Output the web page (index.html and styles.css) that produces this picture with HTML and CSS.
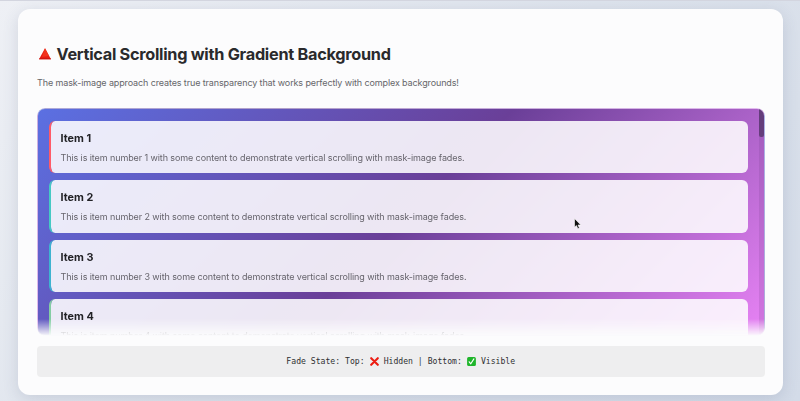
FILE: index.html
```html
<!DOCTYPE html>
<html lang="en">
<head>
<meta charset="utf-8">
<title>Vertical Scrolling with Gradient Background</title>
<link rel="stylesheet" href="styles.css">
</head>
<body>
<main class="panel">
  <h1 class="title">
    <svg class="triangle" viewBox="0 0 14 12" aria-hidden="true"><path d="M7 .3 13 11.2H1Z" fill="#e61b12"/><path d="M7 .3 11 8 4 9Z" fill="#f2321c"/><path d="M1.5 10.2h11l.5 1H1Z" fill="#c9130e"/></svg>
    <span class="title-text">Vertical Scrolling with Gradient Background</span>
  </h1>
  <p class="intro">The mask-image approach creates true transparency that works perfectly with complex backgrounds!</p>
  <section class="scroller">
    <div class="list">
      <article class="item red"><h2>Item 1</h2><p>This is item number 1 with some content to demonstrate vertical scrolling with mask-image fades.</p></article>
      <article class="item teal"><h2>Item 2</h2><p>This is item number 2 with some content to demonstrate vertical scrolling with mask-image fades.</p></article>
      <article class="item blue"><h2>Item 3</h2><p>This is item number 3 with some content to demonstrate vertical scrolling with mask-image fades.</p></article>
      <article class="item green"><h2>Item 4</h2><p>This is item number 4 with some content to demonstrate vertical scrolling with mask-image fades.</p></article>
    </div>
    <div class="track"><div class="thumb"></div></div>
  </section>
  <footer class="status">
    <span>Fade State: Top:</span>
    <svg class="mark" viewBox="0 0 9 9" aria-hidden="true"><path d="M1.2 1.2 7.8 7.8M7.8 1.2 1.2 7.8" stroke="#ec1c12" stroke-width="2.1" stroke-linecap="round"/></svg>
    <span>Hidden | Bottom:</span>
    <svg class="mark" viewBox="0 0 9 9" aria-hidden="true"><rect x=".1" y=".1" width="8.8" height="8.8" rx="1.5" fill="#1fb52b"/><path d="M2.2 4.8 3.8 6.8 6.9 1.9" fill="none" stroke="#fff" stroke-width="1.1" stroke-linecap="round" stroke-linejoin="round"/></svg>
    <span>Visible</span>
  </footer>
</main>
<svg class="cursor" viewBox="0 0 8 12" aria-hidden="true"><path d="M.5.5V9.2L2.4 7.5 3.9 10.8 5.4 10.1 4 7H6.8Z" fill="#111" stroke="#fff" stroke-width=".6"/></svg>
</body>
</html>
```
FILE: styles.css
```css
* { box-sizing: border-box; }

body {
  margin: 0;
  height: 401px;
  padding: 8px 17px 6.5px 18px;
  overflow: hidden;
  border-top: 1px solid #d3d5df;
  background: linear-gradient(135deg, #eef0f5 0%, #dde3ec 50%, #d3dbe8 100%);
  font-family: Inter, sans-serif;
}

.panel {
  height: 385.5px;
  padding: 35px 18.5px 18px 19px;
  border-radius: 12px;
  background: #fcfcfd;
  box-shadow: 0 4px 16px rgba(60, 75, 110, .16);
}

.title {
  display: flex;
  align-items: center;
  height: 20px;
  margin: 0;
  color: #2a2a2c;
  font-size: 16.3px;
  font-weight: 700;
  line-height: 20px;
  white-space: nowrap;
}

.triangle { width: 14px; height: 12px; margin: 0 4.5px 0 1px; }
.title-text { letter-spacing: -.28px; }

.intro {
  height: 14px;
  margin: 12px 0 18px;
  color: #66666a;
  font-size: 9px;
  letter-spacing: -.12px;
  line-height: 14px;
  white-space: nowrap;
}

.scroller {
  display: flex;
  height: 227.5px;
  overflow: hidden;
  border: 1px solid rgba(225, 225, 235, .6);
  border-radius: 8px;
  background: linear-gradient(135deg, #5b70e2 0%, #6a3f98 50%, #e883f5 100%);
  mask-image: linear-gradient(to bottom, #000 calc(100% - 17px), transparent 100%);
}

.list { flex: 1; min-width: 0; padding: 11.5px 11px 0; }

.item {
  height: 52.7px;
  margin-bottom: 6.9px;
  padding: 11px 10px 0 9.5px;
  border-left: 2px solid;
  border-radius: 6px;
  background: rgba(253, 252, 254, .89);
  background-clip: padding-box;
}

.red { border-color: #ff5b68; }
.teal { border-color: #45c9c4; }
.blue { border-color: #3eb3d0; }
.green { border-color: #84cda4; }

.item h2 {
  margin: 0 0 5px;
  color: #222226;
  font-size: 10.8px;
  font-weight: 700;
  line-height: 14px;
}

.item p {
  margin: 0;
  color: #66646c;
  font-size: 9px;
  letter-spacing: -.1px;
  line-height: 14px;
  white-space: nowrap;
}

.track { width: 5px; background: rgba(80, 40, 100, .13); }
.thumb { height: 28px; border-radius: 0 0 2px 2px; background: rgba(55, 40, 75, .58); }

.status {
  display: flex;
  align-items: center;
  justify-content: center;
  gap: 5px;
  height: 30.5px;
  margin-top: 10.5px;
  border-radius: 4px;
  background: #eeeeef;
  color: #303032;
  font: 8.13px/14px "DejaVu Sans Mono", monospace;
  white-space: pre;
}

.mark { width: 9px; height: 9px; }

.cursor {
  position: absolute;
  left: 574px;
  top: 218px;
  width: 8px;
  height: 12px;
}
```
